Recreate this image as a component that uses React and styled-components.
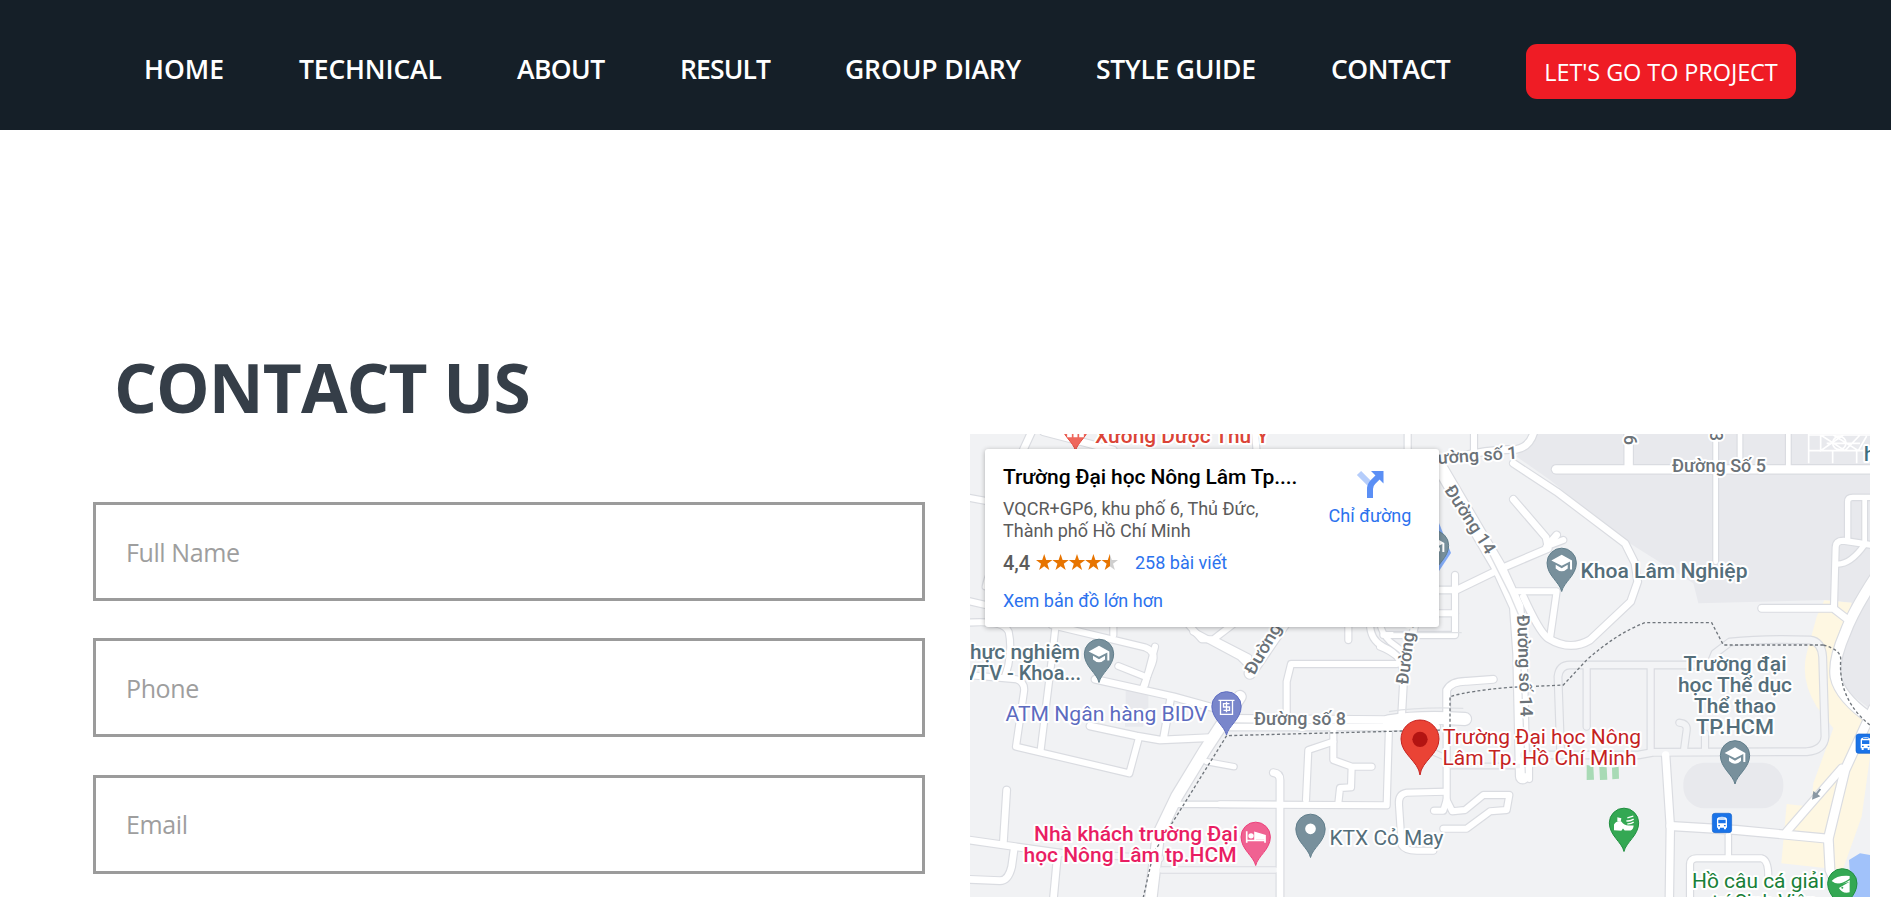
import React from "react";
import styled, { createGlobalStyle } from "styled-components";

const GlobalStyle = createGlobalStyle`
  * { box-sizing: border-box; }
  body {
    margin: 0;
    background: #fff;
    overflow: hidden;
    font-family: "Segoe UI", "Open Sans", "Noto Sans", sans-serif;
  }
`;

const Page = styled.div`
  height: 897px;
  overflow: hidden;
  display: flex;
  flex-direction: column;
`;

const Header = styled.header`
  height: 130px;
  flex: none;
  background: #151f28;
  display: flex;
  align-items: flex-start;
  padding: 44px 0 0 144px;
`;

const NavLink = styled.a`
  flex: none;
  width: ${(p) => p.$width}px;
  margin-right: 75px;
  padding-top: 7px;
  font-size: 26.5px;
  line-height: 36px;
  font-weight: 600;
  letter-spacing: ${(p) => p.$track}px;
  color: #fff;
  text-decoration: none;
  white-space: nowrap;
`;

const ProjectButton = styled.button`
  flex: none;
  width: 270px;
  height: 55px;
  padding: 0;
  border: 0;
  border-radius: 11px;
  background: #ef1c25;
  color: #fff;
  font: 400 23.5px/36px "Segoe UI", "Open Sans", "Noto Sans", sans-serif;
  letter-spacing: -0.1px;
  white-space: nowrap;
`;

const Main = styled.main`
  display: flex;
  align-items: flex-start;
  padding-left: 93px;
`;

const FormColumn = styled.section`
  width: 832px;
  padding-top: 211px;
`;

const Title = styled.h1`
  margin: 0 0 69px 21px;
  font-size: 67.5px;
  line-height: 92px;
  font-weight: 700;
  letter-spacing: -0.95px;
  color: #353e48;
  white-space: nowrap;
`;

const Form = styled.form`
  display: flex;
  flex-direction: column;
  gap: 37.4px;
`;

const Field = styled.input`
  width: 100%;
  height: 99px;
  padding: 0 30px;
  border: 3px solid #9b9b9b;
  border-radius: 0;
  background: #fff;
  font: 400 25px/36px "Segoe UI", "Open Sans", "Noto Sans", sans-serif;
  letter-spacing: -0.4px;
  outline: none;
  &::placeholder { color: #9e9e9e; opacity: 1; }
`;

const MapFrame = styled.section`
  position: relative;
  width: 900px;
  height: 463px;
  margin: 304px 0 0 45px;
  overflow: hidden;
  font-family: Roboto, sans-serif;
`;

const MapCanvas = styled.svg`
  display: block;
  width: 900px;
  height: 463px;
`;

const MapLabel = styled.text`
  font-family: Roboto, sans-serif;
  font-size: ${(p) => p.$size || 20}px;
  font-weight: ${(p) => p.$weight || 500};
  fill: ${(p) => p.$color || "#546e7a"};
  stroke: #fff;
  stroke-width: 4px;
  stroke-linejoin: round;
  paint-order: stroke;
`;

const PlaceCard = styled.aside`
  position: absolute;
  left: 15px;
  top: 15px;
  width: 454px;
  height: 178px;
  padding: 14px 28px 0 18px;
  display: flex;
  justify-content: space-between;
  background: #fff;
  border-radius: 3px;
  box-shadow: 0 1px 5px rgba(0, 0, 0, 0.3);
`;

const PlaceInfo = styled.div`
  display: flex;
  flex-direction: column;
`;

const PlaceName = styled.div`
  font-size: 21px;
  line-height: 28px;
  font-weight: 500;
  letter-spacing: -0.1px;
  color: #000;
  white-space: nowrap;
`;

const Address = styled.div`
  margin-top: 7px;
  font-size: 18px;
  line-height: 22px;
  color: #5b5b5b;
  white-space: nowrap;
`;

const ReviewRow = styled.div`
  display: flex;
  align-items: center;
  height: 24px;
  margin-top: 9px;
`;

const Score = styled.span`
  width: 33px;
  font-size: 20px;
  font-weight: 500;
  color: #5b5b5b;
`;

const Stars = styled.svg`
  width: 82px;
  height: 17px;
  margin: -2px 17px 0 0;
`;

const CardLink = styled.a`
  font-size: 18px;
  line-height: 24px;
  color: #2b72ee;
  text-decoration: none;
  white-space: nowrap;
`;

const LargerMap = styled(CardLink)`
  margin-top: 14px;
`;

const Directions = styled.div`
  width: 82px;
  padding-top: 7px;
  display: flex;
  flex-direction: column;
  align-items: center;
  gap: 6px;
`;

const links = [
  ["HOME", 80, 0],
  ["TECHNICAL", 143, -0.15],
  ["ABOUT", 88, -0.6],
  ["RESULT", 90, -0.85],
  ["GROUP DIARY", 176, -0.12],
  ["STYLE GUIDE", 160, -0.25],
  ["CONTACT", 120, -0.5],
];

// Map geometry is kept in six sheets, three units to a pixel.
// Each road is [path, width, kind]; kind "q" is a quiet lane without white fill.
const sheets = [
  { x: 900, y: 420, roads: [
    ["M395 35L365 100", 20],
    ["M430 35L640 90", 20],
    ["M200 232L275 246", 18],
    ["M300 430Q265 450 256 500", 16],
    ["M205 543L270 558", 18],
    ["M205 608Q310 600 326 635Q336 680 325 735L315 770", 18],
    ["M467 615L455 720L422 990", 18],
    ["M455 615L735 682Q770 695 757 730L730 800", 18],
    ["M640 610L640 645", 18],
    ["M862 610L905 658L940 658L1000 612M940 658L1045 712", 18],
  ]},
  { x: 1220, y: 420, roads: [
    ["M563 35V100", 18], ["M762 35V110", 18], ["M105 35L110 95", 18],
    ["M650 130Q760 90 890 88Q930 80 942 35", 20],
    ["M880 130L1010 215L1215 370L1245 430L1253 485L1232 545L1110 660Q1050 695 985 655Q960 640 910 530", 20],
    ["M880 238L978 352L985 385L840 447L710 510H655", 20],
    ["M990 375L1030 360", 18],
    ["M705 465V645H490", 18], ["M655 580H705", 18],
    ["M650 125L835 440L890 560L900 700L908 1070", 40],
    ["M888 514H1010L990 655", 18],
    ["M385 610V660", 18],
    ["M450 610Q450 660 490 680Q560 710 545 780", 18],
    ["M480 610Q485 640 510 665L570 710", 16],
    ["M220 570L90 760", 32], ["M590 590L552 760L545 885", 20],
    ["M-80 635L60 710L90 740", 18],
  ]},
  { x: 1550, y: 420, roads: [
    ["M18 148H975", 25], ["M236 35V145", 25], ["M497 35V425", 14], ["M570 35V145", 14], ["M715 35V145", 14],
    ["M20 345L-10 380", 20],
    ["M970 232H908Q893 232 893 245V360", 16], ["M944 235V370", 14],
    ["M970 376L880 362Q857 362 857 382L852 560", 18],
    ["M860 432Q900 435 943 375", 16],
    ["M635 565H850L895 600", 20],
    ["M990 450Q910 570 885 640Q850 720 857 770Q870 835 975 905", 30],
  ]},
  { x: 900, y: 650, roads: [
    ["M205 75L350 88Q376 98 372 125L348 290L688 370L715 270", 18],
    ["M655 48L740 82M765 -10L735 105", 18],
    ["M585 88L820 140L935 172", 20],
    ["M812 145L790 268M570 228L710 258L780 270L930 263", 20],
    ["M1020 140L915 300L830 440L775 555L752 750", 34],
    ["M920 335L1002 350", 16],
    ["M830 463H1140", 16],
    ["M320 420L310 580M205 570L345 590L480 609", 20],
    ["M480 609L780 625", 18, "q"],
    ["M342 600L335 650Q325 692 300 692L205 688M472 620L460 750", 20],
    ["M785 660H1125", 16, "q"],
  ]},
  { x: 1220, y: 650, roads: [
    ["M30 206L495 210", 22], ["M20 231H650", 20],
    ["M505 214Q600 198 735 207", 36],
    ["M200 190V95L213 42H530", 18], ["M545 30Q510 0 480 -10", 18],
    ["M680 200V450", 18], ["M680 200V120Q695 93 740 94L820 88", 20],
    ["M340 240V330L395 350H455M395 350L393 412L360 414L355 460", 18],
    ["M340 275L265 300L258 450", 18],
    ["M160 368Q180 370 180 390V750", 20],
    ["M0 463L500 466L507 230", 18],
    ["M675 425L560 428Q534 432 537 465L545 585Q555 602 590 602H640", 18],
    ["M680 450L670 482H642M680 450L697 484L735 480L790 435H868L860 480L810 484L740 536H670", 18],
    ["M690 348H900", 14, "q"], ["M625 300L670 320", 14, "q"],
    ["M908 330V388M928 330V388", 16],
  ]},
  { x: 1550, y: 650, roads: [
    ["M32 310L24 80Q28 45 60 45H480L495 10L540 -24Q640 -35 780 -30Q815 -25 818 20L825 260Q822 300 770 305L310 307L265 315H-80", 20, "q"],
    ["M110 50V230M302 50V300M465 250V300", 18, "q"],
    ["M388 218Q412 220 410 240L402 300", 18, "q"],
    ["M347 315L361 530L358 750", 22],
    ["M361 528L560 540L835 566", 24],
    ["M710 545L875 355", 22],
    ["M970 175L885 360L835 566L840 660L880 750", 26],
    ["M535 556V625", 16],
    ["M420 750V645Q420 625 440 625H635Q655 630 655 680", 18],
  ]},
];

const trails = [
  [1550, 420, "M820 675L520 675L485 608H285Q200 640 110 720L40 795L0 797L-120 802Q-240 812 -300 830V930H-325L-970 947L-1190 1300L-1222 1440"],
  [1550, 420, "M820 675Q875 690 872 720Q865 840 960 915"],
];

const at = (x, y) => `translate(${x} ${y}) scale(0.33333)`;

function Roads() {
  return (
    <g fill="none" strokeLinejoin="round" strokeLinecap="round">
      {["casing", "fill"].map((pass) =>
        sheets.map((s) => (
          <g key={`${pass}-${s.x}-${s.y}`} transform={at(s.x, s.y)}>
            {s.roads.map(([d, w, kind]) => (
              <path
                key={d}
                d={d}
                strokeWidth={pass === "casing" ? w + 7 : w}
                stroke={pass === "casing" ? "#dadce1" : kind === "q" ? "#f3f4f6" : "#fff"}
              />
            ))}
          </g>
        ))
      )}
    </g>
  );
}

function Pin({ x, y, color, edge, children }) {
  return (
    <g transform={at(x, y)}>
      <path
        d="M0 0C-6 -28 -44 -48 -44 -86A44 44 0 1 1 44 -86C44 -48 6 -28 0 0Z"
        fill={color} stroke={edge || color} strokeWidth="3"
      />
      <g transform="translate(0 -86)">{children}</g>
    </g>
  );
}

const Cap = () => (
  <g fill="#fff">
    <path d="M0 -24L-31 -7L0 9L25 -4V20H31V-7Z" />
    <path d="M-18 6V17Q0 34 18 17V6L0 16Z" />
  </g>
);

const slate = { color: "#78909c", edge: "#607d8b" };

function Bus({ x, y }) {
  return (
    <g transform={at(x, y)}>
      <rect width="58" height="58" rx="8" fill="#1a73e8" stroke="#1765cc" strokeWidth="2" />
      <path fill="#fff" fillRule="evenodd" d="M14 18Q14 10 29 10Q44 10 44 18V43H41V48H35V43H23V48H17V43H14ZM18 19V30H40V19ZM18 35V39H23V35ZM35 35V39H40V35ZM21 13V15H37V13Z" />
    </g>
  );
}

function Label({ x, y, w, rotate, anchor, children, ...rest }) {
  return (
    <MapLabel
      x={x} y={y} textAnchor={anchor}
      textLength={w} lengthAdjust="spacingAndGlyphs"
      transform={rotate ? `rotate(${rotate} ${x} ${y})` : undefined}
      {...rest}
    >
      {children}
    </MapLabel>
  );
}

const street = { $color: "#6b7278", $size: 17.5, $weight: 500 };

function CampusMap() {
  return (
    <MapCanvas viewBox="970 434 900 463">
      <rect x="970" y="434" width="900" height="463" fill="#f1f2f4" />
      <g transform={at(1550, 420)}>
        <path d="M-60 40L-100 110L0 180L215 355L430 490L445 550L830 540L905 548L870 720L885 810L965 870V35Z" fill="#e8e9ed" />
        <path d="M823 541L905 548L862 700Q850 780 960 920V1010L935 1190L878 1350L694 1330L710 1152L783 1160L790 1090L850 925L800 860Q750 780 770 700L800 590Z" fill="#fef7e2" />
        <path d="M897 1320L930 1300L965 1306V1440H905Z" fill="#a1c2fa" />
      </g>
      <g transform={at(1550, 650)}>
        <rect x="400" y="338" width="300" height="137" rx="64" fill="#e8e9ed" />
        <path d="M110 345L130 348L132 389L110 390ZM148 350L170 352L172 389L150 390ZM186 353L206 350L207 386L187 388Z" fill="#a8dab5" />
      </g>
      <g transform={at(900, 650)} fill="#e8e9ed">
        <rect x="677" y="122" width="68" height="55" /><rect x="675" y="210" width="55" height="20" />
      </g>
      <Roads />
      <g transform={at(1220, 420)} fill="none" stroke="#dfe1e5" strokeWidth="4">
        <path d="M800 385L868 520L898 590L902 720L916 1060M520 638H725" />
        <path d="M507 865Q600 850 730 855" transform="translate(0 10)" />
      </g>
      <g transform={at(1550, 420)} fill="none" stroke="#fff" strokeWidth="5">
        <path d="M776 42V130M776 92H960M776 45H960M848 92V130M812 45V92L880 45M812 45L885 92M850 45L925 92L950 48M885 92L930 45M920 92V130M830 70H930" />
        <circle cx="868" cy="69" r="20" />
      </g>
      {trails.map(([x, y, d]) => (
        <path key={d} transform={at(x, y)} d={d} fill="none" stroke="#70767c" strokeWidth="4" strokeDasharray="9 7" />
      ))}
      <path d="M1439 523L1451 553L1439 571Z" fill="#82aaf5" />
      <g transform={at(1550, 650)}>
        <path d="M811 417L798 434" stroke="#8a98a4" strokeWidth="6" />
        <path d="M786 449L790 423L811 439Z" fill="#8a98a4" />
      </g>

      <Pin x={1434} y={574} {...slate}><Cap /></Pin>
      <Pin x={1075.5} y={451} color="#ee675c" edge="#e5493d">
        <path d="M-25 -22H25V8H11V-10H6V8H-6V-10H-11V8H-25Z" transform="translate(0 37)" fill="#fff" />
      </Pin>
      <Pin x={1099} y={682.5} {...slate}><Cap /></Pin>
      <Pin x={1561.7} y={591.5} {...slate}><Cap /></Pin>
      <Pin x={1735} y={784} {...slate}><Cap /></Pin>
      <Pin x={1226.5} y={735} color="#7986cb" edge="#5c6bc0">
        <path d="M-24 -18H24M-18 -18V24H18V-18M9 -8H-9V2H9V12H-9M0 -14V18" fill="none" stroke="#fff" strokeWidth="4" />
      </Pin>
      <Pin x={1255.7} y={865.5} color="#f06292" edge="#ec407a">
        <path d="M-27 -17V18M-27 11H28V18M28 11V-4L-2 -13V10" fill="none" stroke="#fff" strokeWidth="5" />
        <path d="M-2 -13L28 -4V9H-2Z" fill="#fff" /><circle cx="-14" cy="-3" r="8" fill="#fff" />
      </Pin>
      <Pin x={1310.5} y={857.5} {...slate}><circle r="16" fill="#fff" /></Pin>
      <Pin x={1624} y={851.5} color="#34a853" edge="#1e8e3e">
        <path d="M-30 22V5Q-22 -8 -8 -4Q0 8 14 8H29Q28 20 20 23H2L-3 17L-8 24ZM-20 -17L-8 -14L-10 -3L-20 -4Z" fill="#fff" />
        <path d="M10 -15L28 -20M7 -6Q18 -4 29 -11M10 3Q20 4 29 -2" stroke="#fff" strokeWidth="4" fill="none" />
      </Pin>
      <Pin x={1842.3} y={912} color="#34a853" edge="#1e8e3e">
        <path d="M-32 -7Q-16 -25 22 -22V27Q0 32 -10 14L22 -5Q-6 5 -22 -1Z" fill="#fff" />
        <path d="M-30 -1Q-12 12 24 -13" stroke="#34a853" strokeWidth="4" fill="none" /><circle cx="0" cy="13" r="3" fill="#34a853" />
      </Pin>
      <g transform={at(1420, 775)}>
        <path d="M0 0C-5 -42 -57 -62 -57 -108A57 57 0 1 1 57 -108C57 -62 5 -42 0 0Z" fill="#ea4335" stroke="#c5221f" strokeWidth="3" />
        <circle cy="-107" r="23" fill="#b31412" />
      </g>
      <Bus x={1712.3} y={813.3} />
      <Bus x={1856} y={734} />

      <Label x={1095} y={443} w={174} $color="#db4437">Xưởng Dược Thú Y</Label>
      <Label x={1438} y={464} w={80} rotate={-4} {...street}>ường số 1</Label>
      <Label x={1444} y={490} w={78} rotate={57} {...street}>Đường 14</Label>
      <Label x={1517} y={615} w={102} rotate={88} {...street}>Đường số 14</Label>
      <Label x={1254} y={676} w={56} rotate={-60} {...street}>Đường</Label>
      <Label x={1408} y={685} w={76} rotate={-83} {...street}>Đường số</Label>
      <Label x={1254} y={725} w={92} {...street}>Đường số 8</Label>
      <Label x={1672} y={472} w={94} {...street}>Đường Số 5</Label>
      <Label x={1624} y={435} w={10} rotate={90} {...street}>6</Label>
      <Label x={1710} y={431} w={10} rotate={90} {...street}>3</Label>
      <Label x={1864} y={461} $color="#3f6f7f">h</Label>
      <Label x={1580.5} y={578} w={167}>Khoa Lâm Nghiệp</Label>
      <Label x={970} y={659} w={110}>hực nghiệm</Label>
      <Label x={964} y={680} w={117}>VTV - Khoa...</Label>
      <Label x={1005.5} y={720.5} w={202} $color="#5c6bc0" $weight={400}>ATM Ngân hàng BIDV</Label>
      <Label x={1034} y={841} w={204} $color="#e91e63">Nhà khách trường Đại</Label>
      <Label x={1023.5} y={862} w={213} $color="#e91e63">học Nông Lâm tp.HCM</Label>
      <Label x={1329.5} y={844.5} w={114} $weight={400}>KTX Cỏ May</Label>
      <Label x={1443} y={744} w={198} $color="#c5221f" $weight={400}>Trường Đại học Nông</Label>
      <Label x={1442.5} y={765} w={194} $color="#c5221f" $weight={400}>Lâm Tp. Hồ Chí Minh</Label>
      <Label x={1735} y={671} w={103} anchor="middle">Trường đại</Label>
      <Label x={1735} y={692} w={114} anchor="middle">học Thể dục</Label>
      <Label x={1735} y={713} w={82} anchor="middle">Thể thao</Label>
      <Label x={1735} y={733.5} w={78} anchor="middle">TP.HCM</Label>
      <Label x={1692} y={887.5} w={132} $color="#188038" $weight={400}>Hồ câu cá giải</Label>
      <Label x={1712} y={908.5} w={105} $color="#188038" $weight={400}>trí Sinh Viên</Label>
    </MapCanvas>
  );
}

const starPath = "M8.2 0L10.2 6H16.4L11.4 9.8L13.3 16L8.2 12.3L3.1 16L5 9.8L0 6H6.2Z";

function Rating() {
  return (
    <Stars viewBox="0 0 82 17">
      <defs>
        <linearGradient id="half">
          <stop offset="0.5" stopColor="#e77400" /><stop offset="0.5" stopColor="#cfcfcf" />
        </linearGradient>
      </defs>
      {[0, 1, 2, 3, 4].map((i) => (
        <path key={i} transform={`translate(${i * 16.4} 0)`} d={starPath} fill={i === 4 ? "url(#half)" : "#e77400"} />
      ))}
    </Stars>
  );
}

export default function App() {
  return (
    <Page>
      <GlobalStyle />
      <Header>
        {links.map(([name, width, track]) => (
          <NavLink key={name} $width={width} $track={track}>{name}</NavLink>
        ))}
        <ProjectButton>LET'S GO TO PROJECT</ProjectButton>
      </Header>
      <Main>
        <FormColumn>
          <Title>CONTACT US</Title>
          <Form>
            <Field placeholder="Full Name" />
            <Field placeholder="Phone" />
            <Field placeholder="Email" />
          </Form>
        </FormColumn>
        <MapFrame>
          <CampusMap />
          <PlaceCard>
            <PlaceInfo>
              <PlaceName>Trường Đại học Nông Lâm Tp....</PlaceName>
              <Address>VQCR+GP6, khu phố 6, Thủ Đức,<br />Thành phố Hồ Chí Minh</Address>
              <ReviewRow>
                <Score>4,4</Score>
                <Rating />
                <CardLink>258 bài viết</CardLink>
              </ReviewRow>
              <LargerMap>Xem bản đồ lớn hơn</LargerMap>
            </PlaceInfo>
            <Directions>
              <svg width="28" height="28" viewBox="0 0 28 28">
                <path d="M3 3L14 14" stroke="#b5cdfb" strokeWidth="6" fill="none" />
                <path d="M14 28V19Q14 15 17 12L22 7" stroke="#5b8ff5" strokeWidth="6" fill="none" />
                <path d="M15 1H27.500V13.500Z" fill="#5b8ff5" />
              </svg>
              <CardLink>Chỉ đường</CardLink>
            </Directions>
          </PlaceCard>
        </MapFrame>
      </Main>
    </Page>
  );
}
